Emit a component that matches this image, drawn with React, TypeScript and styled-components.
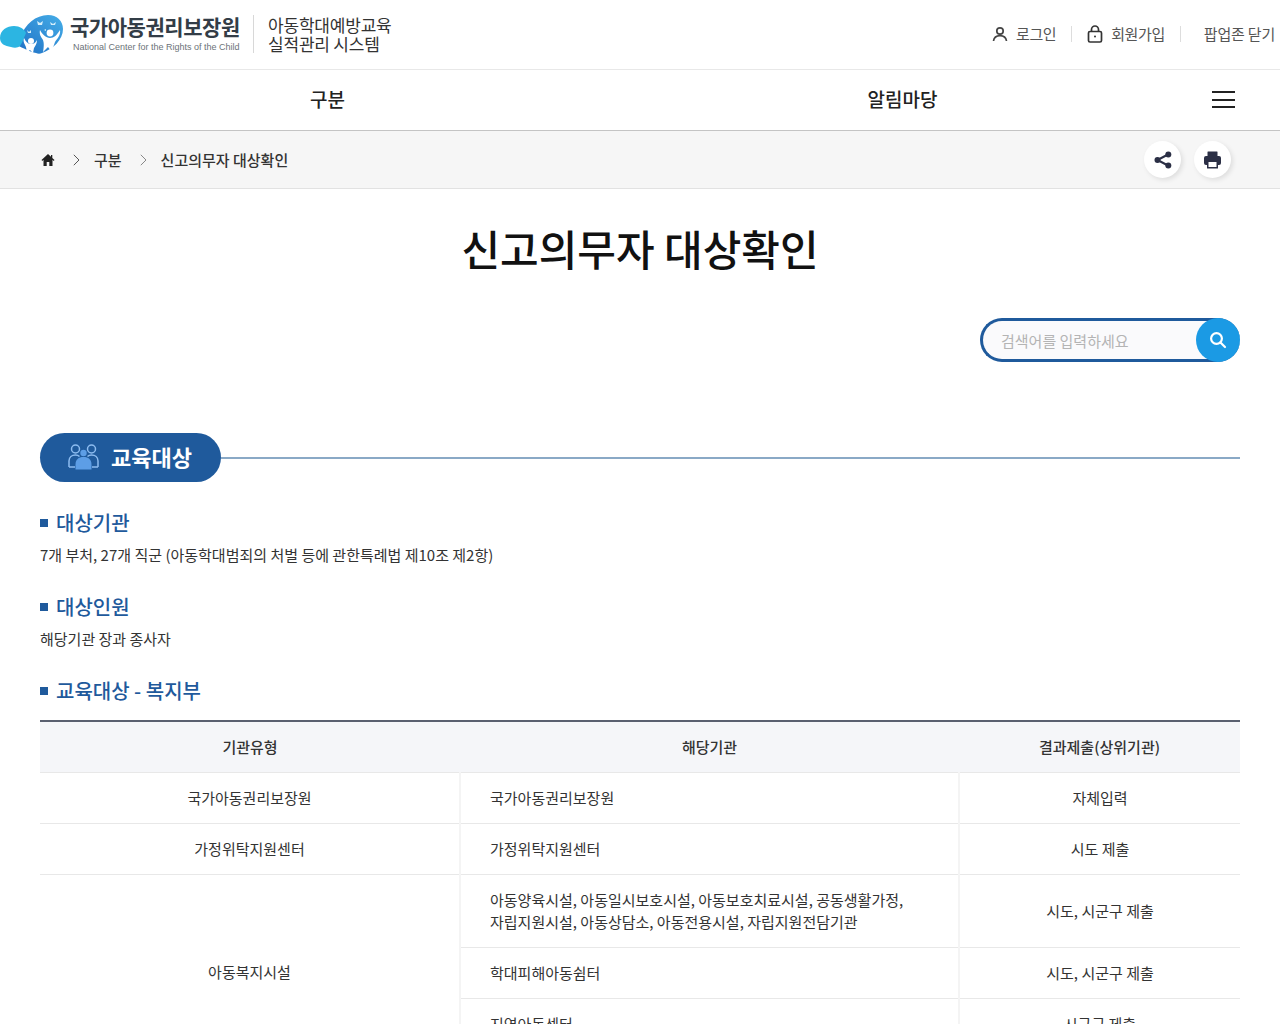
import styled, { createGlobalStyle } from 'styled-components'

const GlobalStyle = createGlobalStyle`
  html, body {
    margin: 0;
    padding: 0;
    background: #fff;
  }
  body {
    font-family: 'Noto Sans CJK KR', 'Noto Sans', sans-serif;
    color: #222;
  }
  * { box-sizing: border-box; }
`

const Page = styled.div`
  width: 1280px;
  height: 1024px;
  overflow: hidden;
`

const TopBar = styled.header`
  display: flex;
  justify-content: space-between;
  align-items: center;
  height: 70px;
  padding: 0 5px 2px 0;
  border-bottom: 1px solid #e8e8e8;
`

const LogoWrap = styled.div`
  display: flex;
  align-items: center;
  height: 50px;
`

const LogoText = styled.div`
  display: flex;
  flex-direction: column;
  width: 170px;
  margin-left: 6px;
  > strong {
    font-size: 21px;
    line-height: 25px;
    font-weight: 700;
    letter-spacing: -0.45px;
    color: #333d47;
    white-space: nowrap;
  }
  > span {
    margin: 2px 0 0 3px;
    font-family: 'Liberation Sans', sans-serif;
    font-size: 9px;
    line-height: 12px;
    color: #6c7379;
    white-space: nowrap;
  }
`

const SystemName = styled.div`
  margin-left: 13px;
  padding-left: 14px;
  border-left: 1px solid #d8d8d8;
  font-size: 17px;
  line-height: 19px;
  color: #333;
  letter-spacing: -0.2px;
`

const UserMenu = styled.nav`
  display: flex;
  align-items: center;
  font-size: 15px;
  letter-spacing: -0.4px;
  color: #555;
`

const UserItem = styled.a`
  display: flex;
  align-items: center;
  gap: 8px;
  height: 16px;
  padding: 0 15px;
  border-right: 1px solid #ddd;
  white-space: nowrap;
  &:last-child {
    border-right: 0;
    padding: 0 0 0 23px;
    letter-spacing: -0.2px;
  }
`

const MainNav = styled.nav`
  display: grid;
  grid-template-columns: 655px 495px 1fr;
  align-items: center;
  height: 61px;
  padding-bottom: 3px;
  border-bottom: 1px solid #c4c4c4;
`

const NavLabel = styled.a`
  font-size: 19px;
  font-weight: 500;
  color: #222;
  text-align: center;
`

const Burger = styled.button`
  display: flex;
  flex-direction: column;
  justify-content: space-between;
  width: 23px;
  height: 17px;
  margin: 2px 0 0 62px;
  padding: 0;
  border: 0;
  background: none;
  > i {
    display: block;
    height: 2px;
    background: #222;
  }
`

const Crumbs = styled.div`
  display: flex;
  align-items: center;
  justify-content: space-between;
  height: 58px;
  padding: 0 49px 0 40px;
  background: #f6f6f6;
  border-bottom: 1px solid #e2e2e2;
`

const CrumbList = styled.div`
  display: flex;
  align-items: center;
  font-size: 15px;
  font-weight: 500;
  color: #333;
  > svg:first-child {
    margin-left: 1px;
  }
`

const CrumbArrow = styled.svg`
  width: 7px;
  height: 12px;
  margin: 0 14px 0 18px;
`

const CrumbTools = styled.div`
  display: flex;
  gap: 13px;
`

const RoundButton = styled.button`
  display: flex;
  align-items: center;
  justify-content: center;
  width: 37px;
  height: 37px;
  padding: 0;
  border: 0;
  border-radius: 50%;
  background: #fff;
  box-shadow: 2px 2px 5px rgba(0, 0, 0, 0.1);
`

const Content = styled.main`
  padding: 0 40px;
`

const Title = styled.h1`
  margin: 31px 0 0;
  font-size: 42px;
  line-height: 56px;
  font-weight: 500;
  text-align: center;
  color: #111;
`

const SearchRow = styled.div`
  display: flex;
  justify-content: flex-end;
  margin-top: 42px;
`

const SearchBox = styled.div`
  display: flex;
  align-items: center;
  justify-content: space-between;
  width: 260px;
  height: 44px;
  padding-left: 18px;
  border: 3px solid #1f5a9c;
  border-right: 0;
  border-radius: 22px;
  background: #fafafc;
  font-size: 15px;
  color: #b4b4b4;
`

const SearchButton = styled.button`
  display: flex;
  align-items: center;
  justify-content: center;
  width: 44px;
  height: 44px;
  margin: -3px 0;
  padding: 0;
  border: 0;
  border-radius: 50%;
  background: #1b9ae4;
`

const SectionHead = styled.div`
  display: flex;
  align-items: center;
  margin-top: 71px;
  &::after {
    content: '';
    flex: 1;
    height: 2px;
    background: #8aa9c6;
  }
`

const SectionPill = styled.h2`
  display: flex;
  align-items: center;
  gap: 12px;
  width: 181px;
  height: 49px;
  margin: 0;
  padding: 0 0 3px 28px;
  border-radius: 25px;
  background: #1f5a9c;
  color: #fff;
  font-size: 22px;
  font-weight: 700;
  > svg {
    margin-top: 2px;
  }
`

const SubTitle = styled.h3<{ $top: number }>`
  display: flex;
  align-items: center;
  gap: 8px;
  height: 28px;
  margin: ${(p) => p.$top}px 0 0;
  font-size: 20px;
  line-height: 26px;
  font-weight: 500;
  color: #1f5a9c;
  &::before {
    content: '';
    width: 8px;
    height: 8px;
    background: #1f5a9c;
  }
`

const Desc = styled.p`
  margin: 6px 0 0;
  font-size: 15px;
  line-height: 24px;
  color: #333;
`

const Table = styled.table`
  width: 1200px;
  margin-top: 15px;
  border-collapse: collapse;
  table-layout: fixed;
  border-top: 2px solid #5a6070;
  font-size: 15px;
  color: #333;
`

const Th = styled.th`
  height: 51px;
  background: #f5f6f9;
  border-bottom: 1px solid #e8e8e8;
  font-weight: 500;
  text-align: center;
`

const Td = styled.td<{ $left?: boolean; $line?: boolean; $tail?: boolean }>`
  height: 51px;
  padding: 14px ${(p) => (p.$left ? '29px' : '0')} ${(p) => (p.$tail ? '35px' : '14px')};
  line-height: 22px;
  text-align: ${(p) => (p.$left ? 'left' : 'center')};
  border-bottom: 1px solid #e8e8e8;
  border-left: ${(p) => (p.$line ? '2px solid #f4f4f4' : '0')};
`

const Logo = () => (
  <svg width="64" height="40" viewBox="0 0 64 40">
    <defs>
      <linearGradient id="logoBlue" x1="0" y1="1" x2="1" y2="0">
        <stop offset="0" stopColor="#1f6fc4" />
        <stop offset="1" stopColor="#45aee8" />
      </linearGradient>
    </defs>
    <path d="M20 24C25 10 36 1 48 1c9 0 15 6 15 14 0 11-10 20-21 24-2 1-4 1-6 0-6-1-13-5-19-8 2-2 2-4 3-7z" fill="url(#logoBlue)" />
    <path d="M0 24c0-8 7-12 14-12 6 0 10 3 12 7-2 4-3 9-6 13-2 2-6 2-9 1C5 32 0 30 0 24z" fill="#2cb5e2" />
    <circle cx="50" cy="19" r="3.400" fill="#fff" />
    <path d="M40 16c2 4 6 8 10 8s7-3 10-8c1 5-3 9-5 12-1 3-2 6-4 9l-3-4-5 5c1-6 1-9 0-12-2-3-4-6-3-10z" fill="#fff" />
    <circle cx="31" cy="27" r="3" fill="#fff" />
    <path d="M24 24c2 4 4 6 7 6s4-1 6-4c0 4-2 6-3 8l-1 5-3-3-4 3c1-4 0-6-1-8-1-2-2-4-1-7z" fill="#fff" />
    <path d="M37 7l3 2 3-2-1 4h-4zM50 8l3 2 3-2-1 3h-4zM27 16l2 2 2-2v3h-3zM44 16l2-1v2z" fill="#d4eefa" />
  </svg>
)

const UserIcon = () => (
  <svg width="16" height="16" viewBox="0 0 16 16" fill="none" stroke="#444" strokeWidth="1.700">
    <circle cx="8" cy="5" r="3.200" />
    <path d="M1.500 15c.5-3.600 3-5.400 6.500-5.400s6 1.800 6.500 5.400" />
  </svg>
)

const LockIcon = () => (
  <svg width="16" height="18" viewBox="0 0 16 18" fill="none" stroke="#333" strokeWidth="1.700">
    <rect x="1.500" y="6.500" width="13" height="10.500" rx="1.500" />
    <path d="M4.500 6.500V4.500a3.500 3.500 0 0 1 7 0v2" />
    <circle cx="8" cy="11.500" r="1" fill="#333" stroke="none" />
  </svg>
)

const HomeIcon = () => (
  <svg width="14" height="12" viewBox="0 0 13 12" fill="#222">
    <path d="M6.500 0L0 6l.8.9L2 5.800V12h3.200V8h2.600v4H11V5.800l1.200 1.100.8-.9-2.200-2V1H9.500v1.800z" />
  </svg>
)

const ArrowIcon = ({ tone }: { tone: string }) => (
  <CrumbArrow viewBox="0 0 7 12" fill="none" stroke={tone} strokeWidth="1">
    <path d="M.8.8L6 6 .8 11.200" />
  </CrumbArrow>
)

const ShareIcon = () => (
  <svg width="18" height="18" viewBox="0 0 18 18" fill="#2b2f45">
    <circle cx="14.300" cy="3.500" r="3" />
    <circle cx="3.500" cy="9" r="3" />
    <circle cx="14.300" cy="14.500" r="3" />
    <path d="M3.500 9L14 3.500M3.500 9L14 14.500" stroke="#2b2f45" strokeWidth="2" />
  </svg>
)

const PrintIcon = () => (
  <svg width="17" height="18" viewBox="0 0 17 18" fill="#2b2f45">
    <rect x="3.500" y="0.500" width="10" height="5" rx="0.500" />
    <rect x="0" y="5" width="17" height="9" rx="2" />
    <rect x="3" y="9.500" width="11" height="8" rx="0.500" />
    <rect x="4.500" y="11" width="8" height="5" fill="#fff" />
  </svg>
)

const SearchIcon = () => (
  <svg width="18" height="18" viewBox="0 0 18 18" fill="none" stroke="#fff" strokeWidth="2.200">
    <circle cx="7.500" cy="7.500" r="5.400" />
    <path d="M11.500 11.500L16 16" strokeLinecap="round" />
  </svg>
)

const PeopleIcon = () => (
  <svg width="31" height="26" viewBox="0 0 31 26" fill="none" stroke="#8dbcf0" strokeWidth="1.500">
    <circle cx="7.500" cy="5" r="4" />
    <circle cx="23.500" cy="5" r="4" />
    <path d="M1 23v-6c0-4 3-6 6.500-6 2 0 3 .5 4 1.500M30 23v-6c0-4-3-6-6.500-6-2 0-3 .5-4 1.500M1 23h6M30 23h-6" />
    <circle cx="15.500" cy="9" r="3.200" fill="#5d9ee6" stroke="none" />
    <path d="M7.500 25.500v-5c0-5 3-7.500 8-7.500s8 2.500 8 7.500v5z" fill="#5d9ee6" stroke="none" />
  </svg>
)

const App = () => {
  return (
    <Page>
      <GlobalStyle />
      <TopBar>
        <LogoWrap>
          <Logo />
          <LogoText>
            <strong>국가아동권리보장원</strong>
            <span>National Center for the Rights of the Child</span>
          </LogoText>
          <SystemName>
            아동학대예방교육
            <br />
            실적관리 시스템
          </SystemName>
        </LogoWrap>
        <UserMenu>
          <UserItem>
            <UserIcon />
            로그인
          </UserItem>
          <UserItem>
            <LockIcon />
            회원가입
          </UserItem>
          <UserItem>팝업존 닫기</UserItem>
        </UserMenu>
      </TopBar>
      <MainNav>
        <NavLabel>구분</NavLabel>
        <NavLabel>알림마당</NavLabel>
        <Burger>
          <i />
          <i />
          <i />
        </Burger>
      </MainNav>
      <Crumbs>
        <CrumbList>
          <HomeIcon />
          <ArrowIcon tone="#555" />
          <span>구분</span>
          <ArrowIcon tone="#888" />
          <span>신고의무자 대상확인</span>
        </CrumbList>
        <CrumbTools>
          <RoundButton>
            <ShareIcon />
          </RoundButton>
          <RoundButton>
            <PrintIcon />
          </RoundButton>
        </CrumbTools>
      </Crumbs>
      <Content>
        <Title>신고의무자 대상확인</Title>
        <SearchRow>
          <SearchBox>
            검색어를 입력하세요
            <SearchButton>
              <SearchIcon />
            </SearchButton>
          </SearchBox>
        </SearchRow>
        <SectionHead>
          <SectionPill>
            <PeopleIcon />
            교육대상
          </SectionPill>
        </SectionHead>
        <SubTitle $top={27}>대상기관</SubTitle>
        <Desc>7개 부처, 27개 직군 (아동학대범죄의 처벌 등에 관한특례법 제10조 제2항)</Desc>
        <SubTitle $top={26}>대상인원</SubTitle>
        <Desc>해당기관 장과 종사자</Desc>
        <SubTitle $top={26}>교육대상 - 복지부</SubTitle>
        <Table>
          <colgroup>
            <col style={{ width: 420 }} />
            <col style={{ width: 499 }} />
            <col style={{ width: 281 }} />
          </colgroup>
          <thead>
            <tr>
              <Th>기관유형</Th>
              <Th>해당기관</Th>
              <Th>결과제출(상위기관)</Th>
            </tr>
          </thead>
          <tbody>
            <tr>
              <Td>국가아동권리보장원</Td>
              <Td $left $line>국가아동권리보장원</Td>
              <Td $line>자체입력</Td>
            </tr>
            <tr>
              <Td>가정위탁지원센터</Td>
              <Td $left $line>가정위탁지원센터</Td>
              <Td $line>시도 제출</Td>
            </tr>
            <tr>
              <Td rowSpan={3}>아동복지시설</Td>
              <Td $left $line>
                아동양육시설, 아동일시보호시설, 아동보호치료시설, 공동생활가정,
                <br />
                자립지원시설, 아동상담소, 아동전용시설, 자립지원전담기관
              </Td>
              <Td $line>시도, 시군구 제출</Td>
            </tr>
            <tr>
              <Td $left $line>학대피해아동쉼터</Td>
              <Td $line>시도, 시군구 제출</Td>
            </tr>
            <tr>
              <Td $left $line $tail>지역아동센터</Td>
              <Td $line $tail>시군구 제출</Td>
            </tr>
          </tbody>
        </Table>
      </Content>
    </Page>
  )
}

export default App
